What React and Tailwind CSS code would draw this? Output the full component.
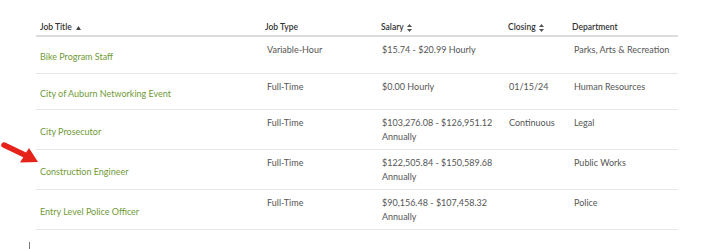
import React from "react";

const jobs = [
  { title: "Bike Program Staff", type: "Variable-Hour", salary: ["$15.74 - $20.99 Hourly"], closing: "", dept: "Parks, Arts & Recreation", h: "h-[37px]" },
  { title: "City of Auburn Networking Event", type: "Full-Time", salary: ["$0.00 Hourly"], closing: "01/15/24", dept: "Human Resources", h: "h-[36px]" },
  { title: "City Prosecutor", type: "Full-Time", salary: ["$103,276.08 - $126,951.12", "Annually"], closing: "Continuous", dept: "Legal", h: "h-[40px]" },
  { title: "Construction Engineer", type: "Full-Time", salary: ["$122,505.84 - $150,589.68", "Annually"], closing: "", dept: "Public Works", h: "h-[40px]" },
  { title: "Entry Level Police Officer", type: "Full-Time", salary: ["$90,156.48 - $107,458.32", "Annually"], closing: "", dept: "Police", h: "h-[40px]" },
];

function SortBoth() {
  return (
    <svg width="5" height="8" viewBox="0 0 5 8" className="ml-[3px] inline-block">
      <path d="M2.5 0 L5 3 L0 3 Z" fill="#555" />
      <path d="M2.5 8 L5 5 L0 5 Z" fill="#555" />
    </svg>
  );
}

function SortUp() {
  return (
    <svg width="5" height="4" viewBox="0 0 5 4" className="ml-[4px] inline-block">
      <path d="M2.5 0 L5 4 L0 4 Z" fill="#444" />
    </svg>
  );
}

export default function App() {
  return (
    <div className="relative h-[249px] w-[710px] bg-white font-['Lato',sans-serif]">
      {/* red arrow */}
      <svg width="42" height="26" viewBox="0 0 42 26" className="absolute left-0 top-[140px]">
        <path d="M4 5 L27 16" stroke="#e5231b" strokeWidth="5.5" strokeLinecap="round" />
        <path d="M38 22 L20 22.5 L29 8 Z" fill="#e5231b" />
      </svg>

      <div className="absolute left-[29px] top-[242px] h-[7px] w-px bg-[#777]" />

      <div className="ml-[36px] w-[642px] pt-[15px]">
        <div className="flex h-[22px] items-end border-b-2 border-[#dcdcdc] pb-[2px] text-[8.5px] leading-[12px] font-semibold text-[#333]">
          <div className="w-[227px] pl-[4px]">Job Title<SortUp /></div>
          <div className="w-[115px] pl-[2px]">Job Type</div>
          <div className="w-[127px] pl-[3px]">Salary<SortBoth /></div>
          <div className="w-[64px] pl-[3px]">Closing<SortBoth /></div>
          <div className="w-[109px] pl-[3px]">Department</div>
        </div>

        {jobs.map((j) => (
          <div key={j.title} className={`flex border-b border-[#e6e6e6] text-[9px] leading-[14px] text-[#555] ${j.h}`}>
            <div className="flex w-[227px] items-center pl-[4px] pt-[4px] text-[#6f9a36]">{j.title}</div>
            <div className="w-[115px] pl-[4px] pt-[6px]">{j.type}</div>
            <div className="w-[127px] pl-[4px] pt-[6px]">
              {j.salary.map((s) => (
                <div key={s}>{s}</div>
              ))}
            </div>
            <div className="w-[64px] pl-[4px] pt-[6px]">{j.closing}</div>
            <div className="w-[109px] pl-[5px] pt-[6px]">{j.dept}</div>
          </div>
        ))}
      </div>
    </div>
  );
}
